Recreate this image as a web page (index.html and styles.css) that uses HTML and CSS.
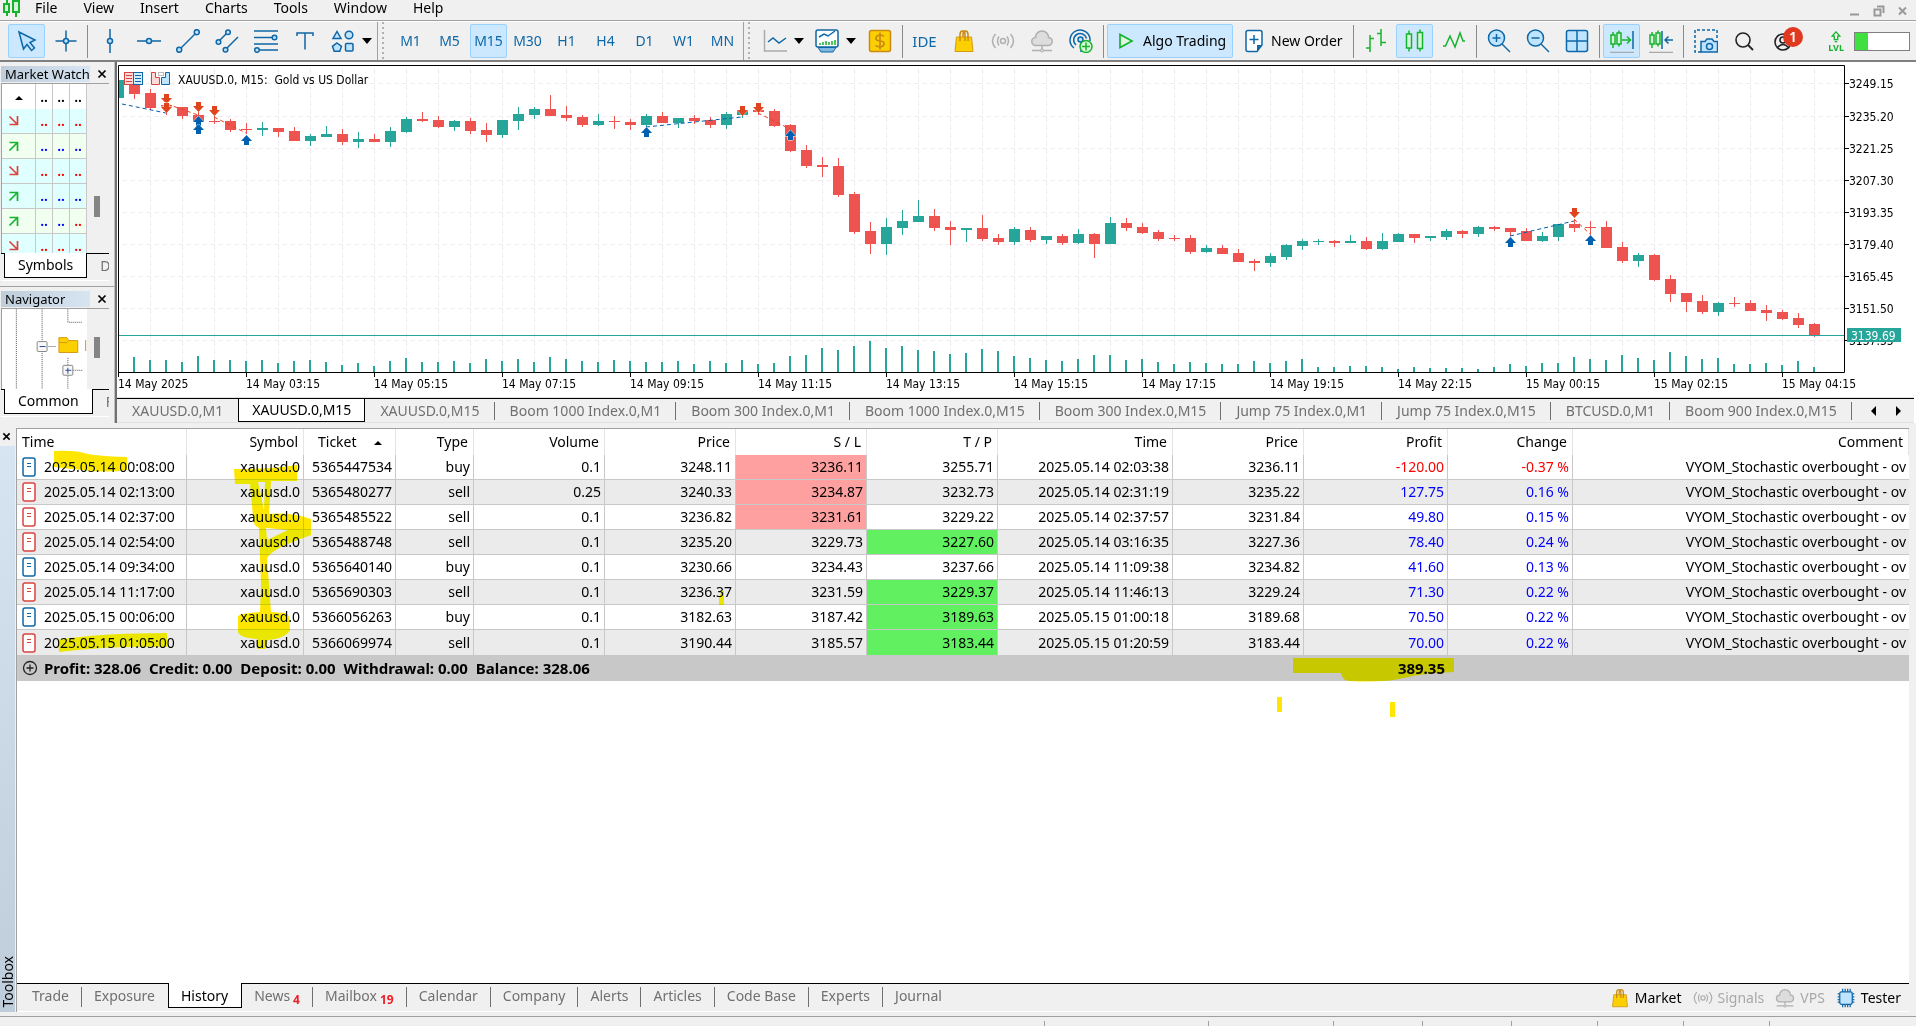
FILE: index.html
```html
<!DOCTYPE html>
<html lang="en">
<head>
<meta charset="utf-8">
<title>XAUUSD.0,M15</title>
<link rel="stylesheet" href="styles.css">
</head>
<body>
<svg class="defs" aria-hidden="true">
  <symbol id="i-bag" viewBox="0 0 24 24"><path d="M4.500 8h15l1.500 14.500H3z" fill="#fcd000" stroke="#d49a12"/><path d="M8 12V5.500Q8 2 10.500 2T13 5.500V12M11 8V5.500Q11 2 13.500 2T16 5.500V12" fill="none" stroke="#c98a12" stroke-width="1.500"/></symbol>
  <symbol id="i-signal" viewBox="0 0 24 24"><g fill="none" stroke="#b0b0b0" stroke-width="1.500"><circle cx="12" cy="12" r="2.500"/><path d="M8 7.500q-3 4.500 0 9M16 7.500q3 4.500 0 9M4.500 5q-6 7 0 14M19.500 5q6 7 0 14"/></g></symbol>
  <symbol id="i-cloud" viewBox="0 0 24 24"><path d="M6 16.500a4 4 0 0 1-.5-8 6.500 6.500 0 0 1 13 0 4 4 0 0 1-.5 8z" fill="#ddd" stroke="#b0b0b0" stroke-width="1.500"/><path d="M12 16.500V20M2 21.500h20" stroke="#b0b0b0" stroke-width="1.500"/><circle cx="12" cy="21.500" r="1.500" fill="#ddd" stroke="#b0b0b0"/></symbol>
  <symbol id="i-chip" viewBox="0 0 24 24"><path d="M8 1v22M11 1v22M14 1v22M17 1v22M2 7h20M2 10.500h20M2 14h20M2 17h20" stroke="#0e67a6" stroke-width="1.500"/><rect x="4.500" y="4.500" width="15" height="15" rx="2" fill="#bfe4ff" stroke="#0e67a6" stroke-width="1.500"/></symbol>
  <symbol id="i-deal" viewBox="0 0 14 20"><rect x="1" y="1" width="12" height="18" rx="2" fill="#fff" stroke="currentColor" stroke-width="1.500"/><path d="M5 6.500h4M5 9.500h4" stroke="currentColor" stroke-width="1"/></symbol>
  <symbol id="i-up" viewBox="0 0 12 12"><path d="M1.500 2.500h8V11M9.500 2.500L1.500 10.500" fill="none" stroke="#16b32c" stroke-width="1.700"/></symbol>
  <symbol id="i-down" viewBox="0 0 12 12"><path d="M1.500 9.500h8V1M9.500 9.500L1.500 1.500" fill="none" stroke="#d9443f" stroke-width="1.700"/></symbol>
  <symbol id="i-x" viewBox="0 0 10 10"><path d="M1.500 1.500l7 7M8.500 1.500l-7 7" stroke="currentColor" stroke-width="1.700"/></symbol>
</svg>

<header class="menubar">
  <svg class="logo" viewBox="0 0 18 20"><g fill="#d6f5d6" stroke="#16b32c" stroke-width="2"><path d="M4 0v4M4 12v4M13 0v2M13 12v5"/><rect x="1" y="4" width="5" height="8"/><rect x="10" y="1" width="6" height="11"/></g></svg>
  <nav class="menus">
    <button>File</button><button>View</button><button>Insert</button><button>Charts</button><button>Tools</button><button>Window</button><button>Help</button>
  </nav>
  <div class="window-controls">
    <button aria-label="Minimize"><svg viewBox="0 0 12 12"><path d="M1 9.500h9" stroke="#999" stroke-width="2"/></svg></button>
    <button aria-label="Restore"><svg viewBox="0 0 12 12"><path d="M1.500 4.500h6v6h-6zM4 1.500h6.500V8" fill="none" stroke="#999" stroke-width="2"/></svg></button>
    <button aria-label="Close"><svg viewBox="0 0 12 12"><path d="M2 2.500l7 7M9 2.500l-7 7" stroke="#999" stroke-width="2"/></svg></button>
  </div>
</header>

<div class="toolbar">
  <div class="group draw">
    <button class="tool on" aria-label="Cursor"><svg viewBox="0 0 24 24"><path d="M4 3l4.500 17 3.500-4.500 4.500 6 3-2.500-4.500-5.500 5-2.500z" class="bf"/></svg></button>
    <button class="tool" aria-label="Crosshair"><svg viewBox="0 0 24 24"><path d="M12 1.500v21M1.500 12h21" class="b"/><circle cx="12" cy="12" r="2.500" class="bf"/></svg></button>
    <span class="sep"></span>
    <button class="tool" aria-label="Vertical line"><svg viewBox="0 0 24 24"><path d="M12 0v24" class="b"/><circle cx="12" cy="12" r="2.500" class="bf"/></svg></button>
    <button class="tool" aria-label="Horizontal line"><svg viewBox="0 0 24 24"><path d="M0 12h24" class="b"/><circle cx="12" cy="12" r="2.500" class="bf"/></svg></button>
    <button class="tool" aria-label="Trend line"><svg viewBox="0 0 24 24"><path d="M3 21L21 3" class="b"/><circle cx="3.200" cy="20.800" r="2.500" class="bf"/><circle cx="20.800" cy="3.200" r="2.500" class="bf"/></svg></button>
    <button class="tool" aria-label="Channel"><svg viewBox="0 0 24 24"><path d="M3 13L13 3M10 21L23 8" class="b"/><circle cx="3.500" cy="13" r="2.300" class="bf"/><circle cx="13" cy="3.200" r="2.300" class="bf"/><circle cx="10.500" cy="20.800" r="2.300" class="bf"/></svg></button>
    <button class="tool" aria-label="Fibonacci"><svg viewBox="0 0 24 24"><path d="M0 2h24M0 8.500h18M0 15h24M5 21h19" class="b"/><circle cx="20.500" cy="8.500" r="2.300" class="bf"/><circle cx="3" cy="21" r="2.300" class="bf"/></svg></button>
    <button class="tool" aria-label="Text"><svg viewBox="0 0 24 24"><path d="M4 7V4h16v3M12 4v16.500" class="b"/></svg></button>
    <button class="tool wide" aria-label="Shapes"><svg viewBox="0 0 24 24"><path d="M6 2.500l4 7H2z" class="bf"/><circle cx="18" cy="6" r="3.800" class="bf"/><path d="M6 14l4.500 3.300-1.700 5H3.200l-1.700-5z" class="bf"/><rect x="14.500" y="14.500" width="7.500" height="7.500" rx="1" class="bf"/></svg><i class="caret"></i></button>
  </div>
  <span class="grip"></span>
  <div class="group frames">
    <button class="tool">M1</button><button class="tool">M5</button><button class="tool on">M15</button><button class="tool">M30</button><button class="tool">H1</button><button class="tool">H4</button><button class="tool">D1</button><button class="tool">W1</button><button class="tool">MN</button>
  </div>
  <span class="grip"></span>
  <div class="group main">
    <button class="tool wide" aria-label="Indicators"><svg viewBox="0 0 24 24"><path d="M1.500 1v21H24" fill="none" stroke="#aaa" stroke-width="1.500"/><path d="M5 13l5-4 6 5 7-5" class="b"/></svg><i class="caret"></i></button>
    <button class="tool wide" aria-label="Templates"><svg viewBox="0 0 24 24"><rect x="1" y="1" width="22" height="17" rx="2" fill="#fff" stroke="#0e67a6" stroke-width="1.500"/><path d="M3 18.500h18l-3 4.500H6z" fill="#7fb8e0" stroke="#0e67a6"/><path d="M4 8l5-3 4 2 7-5" class="b"/><path d="M5 16v-2M8 16v-3M11 16v-4M14 16v-3M17 16v-4M20 16v-5" stroke="#16b32c" stroke-width="1.500"/></svg><i class="caret"></i></button>
    <button class="tool" aria-label="Market watch"><svg viewBox="0 0 24 24"><rect x="1.500" y="1.500" width="21" height="21" rx="2" fill="#fcd000" stroke="#c98a12" stroke-width="1.500"/><path d="M16 7.500Q15 6 12 6T8 8.700 12 12t4 3.300T12 18t-4.500-1.800M12 3.500v17" fill="none" stroke="#c98a12" stroke-width="1.700"/></svg></button>
    <span class="sep"></span>
    <button class="tool ide">IDE</button>
    <button class="tool" aria-label="Market"><svg><use href="#i-bag"/></svg></button>
    <button class="tool" aria-label="Signals"><svg><use href="#i-signal"/></svg></button>
    <button class="tool" aria-label="Virtual hosting"><svg><use href="#i-cloud"/></svg></button>
    <button class="tool" aria-label="Broadcast"><svg viewBox="0 0 24 24"><g class="b"><path d="M5 19A10 10 0 1 1 21 12"/><path d="M7 16A6.500 6.500 0 1 1 17.500 9.500"/></g><path d="M12 11v12" class="b"/><circle cx="11.500" cy="10.500" r="2.500" class="bf"/><circle cx="17" cy="17.500" r="6" fill="#d9f7d9" stroke="#16b32c" stroke-width="1.500"/><path d="M17 13.500v8M13 17.500h8" stroke="#16b32c" stroke-width="1.500"/></svg></button>
    <span class="sep"></span>
    <button class="tool labelled algo on"><svg viewBox="0 0 24 24"><path d="M6 5.500v13L18 12z" fill="#dff7e4" stroke="#16b32c" stroke-width="1.700"/></svg>Algo Trading</button>
    <button class="tool labelled order"><svg viewBox="0 0 24 24"><path d="M6 1.500h12q2 0 2 2V16l-5 6.500H6q-2 0-2-2v-17q0-2 2-2z" fill="#fff" stroke="#0e67a6" stroke-width="1.500"/><path d="M20 16h-5v6.500z" fill="#0e67a6"/><path d="M12 6v9M7.500 10.500h9" class="b"/></svg>New Order</button>
    <span class="sep"></span>
    <button class="tool" aria-label="Bar chart"><svg viewBox="0 0 24 24"><path d="M6 6v17M2 19h4M6 9.500h4M17 0v17M13 4.500h4M17 13.500h5" class="g"/></svg></button>
    <button class="tool on" aria-label="Candlesticks"><svg viewBox="0 0 24 24"><path d="M6 1.500v21M17 .5v22" class="g"/><rect x="3.500" y="5" width="5" height="14" class="gf"/><rect x="14.500" y="3.500" width="5" height="16" class="gf"/></svg></button>
    <button class="tool" aria-label="Line chart"><svg viewBox="0 0 24 24"><path d="M1 17h2.500L8 7l5 11 5-14 3 8h2" class="g"/></svg></button>
    <span class="sep"></span>
    <button class="tool" aria-label="Zoom in"><svg viewBox="0 0 24 24"><path d="M15 15l8 8" class="b"/><circle cx="9.500" cy="9" r="8" class="bf"/><path d="M5.500 9h8M9.500 5v8" class="b"/></svg></button>
    <button class="tool" aria-label="Zoom out"><svg viewBox="0 0 24 24"><path d="M15 15l8 8" class="b"/><circle cx="9.500" cy="9" r="8" class="bf"/><path d="M5.500 9h8" class="b"/></svg></button>
    <button class="tool" aria-label="Tile windows"><svg viewBox="0 0 24 24"><rect x="1.500" y="1.500" width="21" height="21" rx="2" class="bf"/><path d="M12 1.500v21M1.500 12h21" class="b"/></svg></button>
    <span class="sep"></span>
    <button class="tool on" aria-label="Auto scroll"><svg viewBox="0 0 24 24"><path d="M3 3v16M9 1.500v16" class="g"/><rect x="1" y="6" width="4" height="9" class="gf"/><rect x="7" y="4" width="4" height="11" class="gf"/><path d="M12 11h8M17 7.500l3.500 3.500-3.500 3.500" class="g"/><path d="M23 2v18" class="b"/><path d="M0 23.500h24" stroke="#aaa" stroke-width="1.500"/></svg></button>
    <button class="tool" aria-label="Chart shift"><svg viewBox="0 0 24 24"><path d="M3 3v16M9 1.500v16" class="g"/><rect x="1" y="6" width="4" height="9" class="gf"/><rect x="7" y="4" width="4" height="11" class="gf"/><path d="M13 2v18M24 11h-7M19.500 7.500L16 11l3.500 3.500" class="b"/><path d="M0 23.500h24" stroke="#aaa" stroke-width="1.500"/></svg></button>
    <span class="sep"></span>
    <button class="tool" aria-label="Screenshot"><svg viewBox="0 0 24 24"><path d="M7 23H1V1h22v8" fill="none" stroke="#0e67a6" stroke-width="1.500" stroke-dasharray="3 2"/><path d="M7 12.500h4l2-2.500h5l2 2.500h3.500V23H7z" class="bf"/><circle cx="15.500" cy="17.500" r="3" class="bf"/></svg></button>
    <button class="tool" aria-label="Search"><svg viewBox="0 0 24 24"><circle cx="10" cy="11" r="7" fill="none" stroke="#222" stroke-width="1.600"/><path d="M15 16l5 5" stroke="#222" stroke-width="1.800"/></svg></button>
    <button class="tool account" aria-label="Account"><svg viewBox="0 0 24 24"><g fill="none" stroke="#222" stroke-width="1.600"><circle cx="11" cy="13" r="8"/><circle cx="11" cy="11" r="3"/><path d="M5.500 18.500q5.500-6 11 0"/></g></svg><span class="badge">1</span></button>
  </div>
  <div class="level">
    <button class="lvl"><svg viewBox="0 0 12 14"><path d="M6 1l4.500 5H8v4H4V6H1.500zM4.500 12.500h3" fill="none" stroke="#16b32c" stroke-width="1.500"/></svg>LVL</button>
    <div class="battery" role="meter" aria-label="Level" aria-valuemin="0" aria-valuemax="100" aria-valuenow="24"><i style="width: 24%"></i></div>
  </div>
</div>

<div class="workspace">
  <aside class="sidebar">
    <section class="panel market">
      <h2 class="panel-title"><span>Market Watch</span><button aria-label="Close"><svg><use href="#i-x"/></svg></button></h2>
      <div class="panel-body">
        <div class="panel-clip">
        <table class="quotes">
          <thead><tr><th><i class="sort"></i></th><th>..</th><th>..</th><th>..</th></tr></thead>
          <tbody>
            <tr class="c"><td><svg><use href="#i-down"/></svg></td><td class="r">..</td><td class="r">..</td><td class="r">..</td></tr>
            <tr><td><svg><use href="#i-up"/></svg></td><td>..</td><td>..</td><td>..</td></tr>
            <tr class="c"><td><svg><use href="#i-down"/></svg></td><td class="r">..</td><td class="r">..</td><td class="r">..</td></tr>
            <tr class="c"><td><svg><use href="#i-up"/></svg></td><td>..</td><td>..</td><td>..</td></tr>
            <tr><td><svg><use href="#i-up"/></svg></td><td>..</td><td>..</td><td class="r">..</td></tr>
            <tr class="c"><td><svg><use href="#i-down"/></svg></td><td class="r">..</td><td class="r">..</td><td class="r">..</td></tr>
          </tbody>
        </table>
        </div>
        <div class="scroll low"><i></i></div>
      </div>
      <div class="side-tabs"><button class="on">Symbols</button><button>Details</button></div>
    </section>
    <section class="panel navigator">
      <h2 class="panel-title"><span>Navigator</span><button aria-label="Close"><svg><use href="#i-x"/></svg></button></h2>
      <div class="panel-body">
        <svg class="tree" viewBox="0 0 86 82">
          <path d="M14.500 0v82M40.500 0v82M66.500 0v13h15M47 37.500h8M66.500 49v33M72 61.500h10" fill="none" stroke="#555" stroke-dasharray="1 1"/>
          <g fill="#f8f8f8" stroke="#888"><rect x="35.500" y="32.500" width="10" height="10" rx="1"/><rect x="61.500" y="56.500" width="10" height="10" rx="1"/></g>
          <path d="M38 37.500h6M64 61.500h6M66.500 59v6" stroke="#2b4a9b"/>
          <path d="M57.500 43.500v-15h8l2 3h9v12z" fill="#fcd000" stroke="#d49a12"/><path d="M57.500 33.500h8l2-2" fill="none" stroke="#d49a12"/>
          <path d="M84.500 31v11" stroke="#e08a20"/>
        </svg>
        <div class="scroll"><i></i></div>
      </div>
      <div class="side-tabs"><button class="on">Common</button><button>Favorites</button></div>
    </section>
  </aside>
  <main class="chart-pane">
    <svg class="chart" id="chart" viewBox="117 64 1797 333" preserveAspectRatio="xMinYMin meet" role="img" aria-label="XAUUSD.0, M15: Gold vs US Dollar"></svg>
    <div class="chart-tabs">
      <button>XAUUSD.0,M1</button><button class="on">XAUUSD.0,M15</button><button>XAUUSD.0,M15</button><button>Boom 1000 Index.0,M1</button><button>Boom 300 Index.0,M1</button><button>Boom 1000 Index.0,M15</button><button>Boom 300 Index.0,M15</button><button>Jump 75 Index.0,M1</button><button>Jump 75 Index.0,M15</button><button>BTCUSD.0,M1</button><button>Boom 900 Index.0,M15</button>
      <span class="pager"><button class="prev" aria-label="Previous"></button><button class="next" aria-label="Next"></button></span>
    </div>
  </main>
</div>

<section class="dock">
  <div class="dock-strip"><button aria-label="Close"><svg><use href="#i-x"/></svg></button><div class="strip-label"><span>Toolbox</span></div></div>
  <div class="dock-main">
    <div class="history">
      <table class="deals">
        <colgroup><col class="w170"><col class="w117"><col class="w92"><col class="w78"><col class="w131"><col class="w131"><col class="w131"><col class="w131"><col class="w175"><col class="w131"><col class="w144"><col class="w125"><col></colgroup>
        <thead><tr><th class="l">Time</th><th>Symbol</th><th class="l ticket">Ticket <i class="sort"></i></th><th>Type</th><th>Volume</th><th>Price</th><th>S / L</th><th>T / P</th><th>Time</th><th>Price</th><th>Profit</th><th>Change</th><th>Comment</th></tr></thead>
        <tbody>
          <tr><td class="l buy"><svg><use href="#i-deal"/></svg>2025.05.14 00:08:00</td><td>xauusd.0</td><td>5365447534</td><td>buy</td><td>0.1</td><td>3248.11</td><td class="sl">3236.11</td><td>3255.71</td><td>2025.05.14 02:03:38</td><td>3236.11</td><td class="neg">-120.00</td><td class="neg">-0.37 %</td><td>VYOM_Stochastic overbought - ov</td></tr>
          <tr><td class="l sell"><svg><use href="#i-deal"/></svg>2025.05.14 02:13:00</td><td>xauusd.0</td><td>5365480277</td><td>sell</td><td>0.25</td><td>3240.33</td><td class="sl">3234.87</td><td>3232.73</td><td>2025.05.14 02:31:19</td><td>3235.22</td><td class="pos">127.75</td><td class="pos">0.16 %</td><td>VYOM_Stochastic overbought - ov</td></tr>
          <tr><td class="l sell"><svg><use href="#i-deal"/></svg>2025.05.14 02:37:00</td><td>xauusd.0</td><td>5365485522</td><td>sell</td><td>0.1</td><td>3236.82</td><td class="sl">3231.61</td><td>3229.22</td><td>2025.05.14 02:37:57</td><td>3231.84</td><td class="pos">49.80</td><td class="pos">0.15 %</td><td>VYOM_Stochastic overbought - ov</td></tr>
          <tr><td class="l sell"><svg><use href="#i-deal"/></svg>2025.05.14 02:54:00</td><td>xauusd.0</td><td>5365488748</td><td>sell</td><td>0.1</td><td>3235.20</td><td>3229.73</td><td class="tp">3227.60</td><td>2025.05.14 03:16:35</td><td>3227.36</td><td class="pos">78.40</td><td class="pos">0.24 %</td><td>VYOM_Stochastic overbought - ov</td></tr>
          <tr><td class="l buy"><svg><use href="#i-deal"/></svg>2025.05.14 09:34:00</td><td>xauusd.0</td><td>5365640140</td><td>buy</td><td>0.1</td><td>3230.66</td><td>3234.43</td><td>3237.66</td><td>2025.05.14 11:09:38</td><td>3234.82</td><td class="pos">41.60</td><td class="pos">0.13 %</td><td>VYOM_Stochastic overbought - ov</td></tr>
          <tr><td class="l sell"><svg><use href="#i-deal"/></svg>2025.05.14 11:17:00</td><td>xauusd.0</td><td>5365690303</td><td>sell</td><td>0.1</td><td>3236.37</td><td>3231.59</td><td class="tp">3229.37</td><td>2025.05.14 11:46:13</td><td>3229.24</td><td class="pos">71.30</td><td class="pos">0.22 %</td><td>VYOM_Stochastic overbought - ov</td></tr>
          <tr><td class="l buy"><svg><use href="#i-deal"/></svg>2025.05.15 00:06:00</td><td>xauusd.0</td><td>5366056263</td><td>buy</td><td>0.1</td><td>3182.63</td><td>3187.42</td><td class="tp">3189.63</td><td>2025.05.15 01:00:18</td><td>3189.68</td><td class="pos">70.50</td><td class="pos">0.22 %</td><td>VYOM_Stochastic overbought - ov</td></tr>
          <tr><td class="l sell"><svg><use href="#i-deal"/></svg>2025.05.15 01:05:00</td><td>xauusd.0</td><td>5366069974</td><td>sell</td><td>0.1</td><td>3190.44</td><td>3185.57</td><td class="tp">3183.44</td><td>2025.05.15 01:20:59</td><td>3183.44</td><td class="pos">70.00</td><td class="pos">0.22 %</td><td>VYOM_Stochastic overbought - ov</td></tr>
        </tbody>
        <tfoot><tr><td class="l" colspan="10"><svg viewBox="0 0 16 16"><circle cx="8" cy="8" r="6.500" fill="none" stroke="#222" stroke-width="1.300"/><path d="M4.500 8h7M8 4.500v7" stroke="#222" stroke-width="1.300"/></svg>Profit: 328.06&nbsp; Credit: 0.00&nbsp; Deposit: 0.00&nbsp; Withdrawal: 0.00&nbsp; Balance: 328.06</td><td>389.35</td><td colspan="2"></td></tr></tfoot>
      </table>
      <svg class="marker" viewBox="17 429 1892 300" preserveAspectRatio="xMinYMin meet" aria-hidden="true">
        <path d="M54 451q20-1 30 2t43 4v13q-20 3-45 0l-28-3z"/>
        <path fill-rule="evenodd" d="M234 469q40 0 63-4v16H271L269 514Q290 512 311 519V535L290 543Q272 550 267 558L271 612L286 613Q290 614 290 630Q286 638 268 640L265 649H257V639Q240 638 238 632V616Q242 613 260 612L261 585L259 528Q253 526 253 517L250 484H235zM258 482L264 510L265 482zM266 528L288 530L267 540z"/>
        <path d="M58 640q40-7 109-7v14q-60-1-108 5z"/>
        <path d="M719 597l3-6h2v14h-5z"/>
        <path d="M1293 658h161v14q-30 1-50 6t-55 3q-7-1-8-8h-48z"/>
        <path d="M1277 697h5v15h-5zM1390 702h5v15h-5z"/>
      </svg>
    </div>
    <div class="dock-tabs">
      <button>Trade</button><button>Exposure</button><button class="on">History</button><button>News<b>4</b></button><button>Mailbox<b>19</b></button><button>Calendar</button><button>Company</button><button>Alerts</button><button>Articles</button><button>Code Base</button><button>Experts</button><button>Journal</button>
      <div class="services">
        <a href="#market"><svg><use href="#i-bag"/></svg>Market</a>
        <a href="#signals" class="off"><svg><use href="#i-signal"/></svg>Signals</a>
        <a href="#vps" class="off"><svg><use href="#i-cloud"/></svg>VPS</a>
        <a href="#tester"><svg><use href="#i-chip"/></svg>Tester</a>
      </div>
    </div>
  </div>
</section>
<footer class="status"><span class="s0"></span><span class="s1"></span><span class="s2"></span><span class="s3"></span><span class="s3"></span><span class="s4"></span><span class="s4"></span><span class="s4"></span><span class="s5"></span></footer>
<script src="chart.js"></script>
</body>
</html>
```
FILE: styles.css
```css
* { box-sizing: border-box; }
body {
  margin: 0;
  min-height: 100vh;
  display: flex;
  flex-direction: column;
  background: #f0f0f0;
  color: #000;
  font: 14px/20px "Noto Sans", "Open Sans", sans-serif;
  overflow-x: hidden;
}
button {
  margin: 0;
  padding: 0;
  border: 0;
  background: none;
  color: inherit;
  font: inherit;
  white-space: nowrap;
}
svg { display: block; }
.defs { position: absolute; width: 0; height: 0; }
.b { fill: none; stroke: #0e67a6; stroke-width: 1.5; }
.bf { fill: #bfe4ff; stroke: #0e67a6; stroke-width: 1.5; }
.g { fill: none; stroke: #16b32c; stroke-width: 1.5; }
.gf { fill: #d5f7d9; stroke: #16b32c; stroke-width: 1.5; }

/* menu bar */
.menubar {
  display: flex;
  height: 21px;
  padding-left: 3px;
  border-bottom: 1px solid #a0a0a0;
}
.logo { width: 18px; height: 20px; margin-right: 14px; }
.menus { display: flex; gap: 26px; height: 16px; line-height: 16px; }
.window-controls { display: flex; gap: 12px; margin-left: auto; padding: 2px 7px 0 0; }
.window-controls svg { width: 12px; height: 12px; }

/* toolbar */
.toolbar {
  display: flex;
  align-items: center;
  gap: 2px;
  height: 41px;
  padding: 0 6px 0 8px;
  border-top: 1px solid #fff;
  border-bottom: 2px solid #808080;
}
.group { display: flex; align-items: center; gap: 2px; }
.tool {
  display: flex;
  align-items: center;
  justify-content: center;
  width: 37px;
  height: 34px;
  border: 1px solid transparent;
  border-radius: 2px;
}
.tool.on { background: #cce8ff; border-color: #99d1ff; }
.tool svg { width: 24px; height: 24px; flex: none; }
.tool.wide { width: 50px; gap: 7px; justify-content: flex-start; padding-left: 5px; }
.caret { border: 5px solid transparent; border-top: 6px solid #000; border-bottom: 0; }
.sep { width: 3px; height: 33px; display: flex; justify-content: center; }
.sep::before { content: ""; width: 1px; background: #8a8a8a; }
.main .sep { width: 4px; }
.grip {
  width: 12px;
  height: 38px;
  border-left: 1px solid #a0a0a0;
  background: repeating-linear-gradient(#b0b0b0 0 2px, transparent 2px 5px) 4px 0 / 2px 100% no-repeat;
}
.frames { padding-left: 1px; }
.frames, .ide { color: #0e67a6; }
.ide { font-size: 15px; }
.labelled { justify-content: flex-start; gap: 5px; padding-left: 6px; }
.algo { width: 126px; }
.order { width: 114px; }
.account { position: relative; }
.badge {
  position: absolute;
  right: -2px;
  top: 2px;
  width: 20px;
  height: 20px;
  border-radius: 10px;
  background: #e0391f;
  color: #fff;
  font-weight: 600;
}
.level { display: flex; align-items: center; gap: 10px; margin-left: auto; }
.lvl { color: #16b32c; font-size: 9px; line-height: 9px; font-weight: 700; }
.lvl svg { width: 12px; height: 12px; margin: 0 auto; }
.battery { width: 56px; height: 19px; border: 1px solid #808080; background: #fff; }
.battery i { display: block; height: 100%; background: #41e041; }

/* workspace */
.workspace { display: grid; grid-template-columns: 115px minmax(0, 1fr); }
.sidebar { display: flex; flex-direction: column; border-right: 1px solid #c0c0c0; }
.panel { display: flex; flex-direction: column; padding: 3px 5px 0 1px; }
.market { border-bottom: 1px solid #a0a0a0; padding-bottom: 5px; }
.panel-title {
  display: flex;
  align-items: center;
  height: 18px;
  margin: 0;
  font-size: 13px;
  line-height: 16px;
  font-weight: 400;
}
.panel-title span {
  width: 89px;
  padding-left: 4px;
  white-space: nowrap;
  overflow: hidden;
  background: linear-gradient(90deg, #bfcddb, #d7e5f3);
}
.panel-title svg { width: 10px; height: 10px; margin-left: 7px; }
.panel-body {
  display: flex;
  border: 1px solid #a0a0a0;
  border-width: 1px 0 0 1px;
  background: #fff;
}
.market .panel-body { height: 170px; }
.panel-clip { flex: 1; overflow: hidden; }
.scroll { width: 22px; padding: 28px 0 0 7px; background: #f0f0f0; }
.scroll.low { padding-top: 112px; }
.scroll i { display: block; width: 6px; height: 21px; background: #858585; }
.quotes { width: 100%; table-layout: fixed; border-collapse: separate; border-spacing: 0; }
.quotes th, .quotes td {
  width: 17px;
  height: 25px;
  padding: 0;
  border-right: 1px solid #c8c8c8;
  border-bottom: 1px solid #c8c8c8;
  text-align: center;
  font-weight: 600;
  color: #00f;
}
.quotes th { color: #000; border-bottom: 0; }
.quotes th:first-child, .quotes td:first-child { width: 34px; }
.quotes td { background: #f0fff0; }
.quotes .c td { background: #e0ffff; }
.quotes td.r { color: #f00; }
.quotes svg { width: 12px; height: 12px; margin-left: 6px; }
.sort { display: inline-block; border: 4px solid transparent; border-bottom: 4px solid #000; border-top: 0; vertical-align: middle; }
.side-tabs {
  display: flex;
  height: 28px;
  padding-left: 3px;
  overflow: hidden;
  border-bottom: 1px solid #fff;
  background: linear-gradient(#000, #000) 0 0 / 100% 1px no-repeat;
  color: #707070;
}
.side-tabs button { height: 25px; padding: 0 13px; }
.side-tabs .on { background: #fff; color: #000; border: 1px solid #000; border-top: 0; }
.navigator .panel-body { height: 81px; overflow: hidden; }
.tree { width: 86px; height: 82px; }

/* chart */
.chart-pane { border-left: 2px solid #707070; min-width: 0; padding: 2px 2px 0 0; background: #fff; }
.chart { width: 100%; height: auto; border-bottom: 1px solid #e3e3e3; font: 12px "DejaVu Sans Condensed", "DejaVu Sans", sans-serif; }
.chart text.tag { fill: #fff; }
.chart-tabs {
  display: flex;
  height: 25px;
  overflow: hidden;
  border-top: 1px solid #000;
  border-bottom: 1px solid #e0e0e0;
  background: #f0f0f0;
  color: #707070;
}
.chart-tabs > button {
  display: flex;
  align-items: center;
  padding: 0 15px;
  background: linear-gradient(#707070, #707070) 100% 3px / 1px 18px no-repeat;
}
.chart-tabs > button:first-child { background: none; }
.chart-tabs > button.on { background: #fff; color: #000; border: 1px solid #000; border-top: 0; padding: 0 13px; }
.pager { display: flex; gap: 20px; align-items: center; margin-left: auto; padding-right: 13px; }
.pager button { border: 5px solid transparent; border-width: 5px 0; }
.pager .prev { border-right: 5px solid #000; }
.pager .next { border-left: 5px solid #000; }

/* toolbox */
.dock { flex: 1; display: flex; margin-top: 5px; padding-right: 7px; }
.dock-strip { width: 16px; display: flex; flex-direction: column; }
.dock-strip svg { width: 9px; height: 9px; margin: 4px 0 5px 2px; }
.strip-label {
  flex: 1;
  display: flex;
  align-items: flex-end;
  margin-right: 1px;
  background: linear-gradient(#d7e5f3, #bfcddb);
}
.strip-label span { writing-mode: vertical-rl; transform: rotate(180deg); line-height: 15px; padding-top: 4px; }
.dock-main { flex: 1; display: flex; flex-direction: column; min-width: 0; border: 1px solid #a0a0a0; border-width: 1px 0 0 1px; }
.history { position: relative; flex: 1; background: #fff; }
.deals { width: 100%; table-layout: fixed; border-collapse: separate; border-spacing: 0; }
.deals th, .deals td {
  padding: 0 3px;
  height: 25px;
  border-right: 1px solid #c8c8c8;
  border-bottom: 1px solid #c8c8c8;
  text-align: right;
  font-weight: 400;
  line-height: 20px;
  white-space: nowrap;
  overflow: hidden;
}
.deals th { height: 26px; padding-right: 5px; border-bottom: 0; border-right-color: #e5e5e5; }
.deals .l { text-align: left; padding-left: 5px; }
.deals th.ticket { padding-left: 14px; }
.deals .ticket .sort { margin-left: 14px; }
.deals tbody tr:nth-child(even) td { background: #ebebeb; }
.deals tbody td svg { display: inline-block; width: 14px; height: 20px; margin-right: 8px; vertical-align: top; }
.deals tbody tr td.sl { background: #ffa0a0; }
.deals tbody tr td.tp { background: #60f060; }
.deals tbody tr:last-child td { border-bottom: 0; }
.deals td:last-child { border-right: 0; }
.buy svg { color: #0e67a6; }
.sell svg { color: #d9443f; }
.deals .pos { color: #00f; }
.deals .neg { color: #f00; }
.deals tfoot td { height: 26px; background: #c8c8c8; border: 0; font-weight: 700; font-size: 15px; }
.deals tfoot svg { display: inline-block; width: 16px; height: 16px; margin: 2px 6px 0 0; vertical-align: top; }
.w78 { width: 78px; }
.w92 { width: 92px; }
.w117 { width: 117px; }
.w125 { width: 125px; }
.w131 { width: 131px; }
.w144 { width: 144px; }
.w170 { width: 170px; }
.w175 { width: 175px; }
.marker { position: absolute; left: 0; top: 0; width: 100%; fill: #ffe600; mix-blend-mode: darken; pointer-events: none; }
.dock-tabs {
  display: flex;
  height: 29px;
  padding-left: 3px;
  border-bottom: 1px solid #fff;
  background: linear-gradient(#000, #000) 0 0 / 100% 1px no-repeat;
  color: #707070;
}
.dock-tabs > button {
  display: flex;
  height: 25px;
  padding: 2px 13px 0 12px;
  line-height: 22px;
  background: linear-gradient(#707070, #707070) 100% 4px / 1px 20px no-repeat;
}
.dock-tabs > button:nth-child(2), .dock-tabs > button:nth-child(12) { background: none; }
.dock-tabs > button.on { background: #fff; color: #000; border: 1px solid #000; border-top: 0; }
.dock-tabs b { color: #f0202a; font-size: 12px; padding: 4px 0 0 3px; }
.services { display: flex; gap: 11px; margin-left: auto; padding: 5px 8px 0 0; }
.services a { display: flex; gap: 5px; color: #000; text-decoration: none; }
.services a.off { color: #a8a8a8; }
.services svg { width: 20px; height: 20px; }

/* status bar */
.status { display: flex; height: 10px; margin-top: 4px; border-top: 1px solid #a0a0a0; padding-top: 4px; }
.status span { border-right: 1px solid #a0a0a0; }
.status .s0 { flex: 1; }
.status .s1 { width: 164px; }
.status .s2 { width: 125px; }
.status .s3 { width: 89px; }
.status .s4 { width: 86px; }
.status .s5 { width: 146px; border: 0; }
```
FILE: chart.js
```js
// Candles: [direction, high, bodyTop, bodyBottom, low, volumeTop], one every 16 units.
const candles = [
  ['u',80,80,98,98,372],['d',85,85,94,99,357],['d',89,93,108,110,360],['d',104,105,107,115,360],['d',107,107,116,119,362],
  ['d',112,115,122,124,356],['d',116,121,122,124,360],['d',119,121,130,132,360],['d',123,129,130,134,361],['u',122,128,130,136,360],
  ['d',128,128,132,137,363],['d',127,131,141,141,361],['u',134,136,141,146,360],['u',126,134,137,137,362],['d',129,134,142,145,365],
  ['u',132,139,142,148,363],['d',134,139,142,142,366],['u',127,131,142,147,361],['u',117,119,132,133,358],['d',112,119,121,122,362],
  ['d',116,120,127,128,362],['u',120,121,127,131,361],['d',118,121,131,134,363],['d',123,130,135,142,359],['u',120,120,135,138,361],
  ['u',107,114,121,130,359],['u',107,109,115,119,362],['d',95,109,116,116,357],['d',106,115,118,121,359],['d',115,117,125,127,361],
  ['u',114,121,125,126,362],['d',116,121,122,129,360],['d',119,122,125,130,361],['u',114,116,125,127,362],['d',112,116,123,123,362],
  ['u',118,118,123,128,361],['d',115,118,121,124,364],['d',117,120,125,128,361],['u',112,114,125,129,363],['u',110,110,115,118,360],
  ['d',110,110,112,115,364],['d',109,111,126,127,363],['d',124,125,151,152,356],['d',145,150,166,168,355],['d',157,165,167,177,348],
  ['d',158,166,195,197,350],['d',192,194,232,234,346],['d',222,231,244,254,341],['u',218,227,244,255,348],['u',210,221,228,235,346],
  ['u',200,216,222,222,350],['d',209,216,228,231,351],['d',221,227,230,245,354],['u',228,228,230,242,353],['d',215,228,239,241,349],
  ['d',234,238,242,245,351],['u',227,229,242,245,356],['d',227,230,240,242,358],['u',236,236,240,244,360],['d',234,236,243,245,361],
  ['u',229,234,243,244,359],['d',233,234,244,258,355],['u',217,223,244,244,355],['d',218,223,228,231,360],['d',223,227,233,234,359],
  ['d',230,232,239,241,362],['d',235,238,239,241,364],['d',235,238,252,254,362],['u',245,248,252,253,363],['d',245,248,254,254,364],
  ['d',249,253,262,262,364],['d',259,261,263,271,361],['u',253,256,263,267,363],['u',244,245,257,260,361],['u',239,241,246,250,359],
  ['u',239,241,242,245,367],['d',240,241,243,247,367],['u',235,241,243,243,366],['d',237,241,249,250,366],['u',233,241,249,250,367],
  ['u',233,234,242,242,369],['d',234,234,238,243,367],['u',236,236,238,241,368],['u',229,231,237,240,368],['d',230,231,234,238,368],
  ['u',226,227,234,237,369],['d',226,227,229,231,367],['d',228,228,232,236,364],['d',228,231,241,241,366],['u',232,236,241,242,363],
  ['u',224,224,237,241,363],['d',220,224,228,232,357],['d',221,227,228,235,359],['d',221,227,248,248,360],['d',242,247,261,263,355],
  ['u',253,255,261,267,358],['d',254,255,280,281,360],['d',275,279,294,302,352],['d',293,293,302,312,356],['d',295,301,312,314,359],
  ['u',302,303,312,316,358],['d',297,303,304,307,364],['d',300,303,311,311,364],['d',305,310,313,321,363],['d',310,312,319,320,365],
  ['d',313,318,325,328,361],['d',323,324,336,337,367]
];
const LEFT = 118, TOP = 65, BOTTOM = 372, RIGHT = 1844, STEP = 16;
const UP = '#26a69a', DOWN = '#ef5350', BUY = '#0060b0', SELL = '#e0441c';
const out = [];
const rect = (x, y, w, h, fill) => out.push(`<rect x="${x}" y="${y}" width="${w}" height="${h}" fill="${fill}"/>`);
const text = (x, y, s, cls = '') => out.push(`<text x="${x}" y="${y}" class="${cls}">${s}</text>`);
const dash = (x1, y1, x2, y2, color, pattern) =>
  out.push(`<path d="M${x1} ${y1}L${x2} ${y2}" fill="none" stroke="${color}" stroke-dasharray="${pattern}"/>`);

const prices = ['3249.15','3235.20','3221.25','3207.30','3193.35','3179.40','3165.45','3151.50','3137.55'];
const levels = [83,116,148,180,212,244,276,308,340];
for (let x = 150; x < RIGHT; x += 32) dash(x + .5, TOP + 4, x + .5, BOTTOM, '#efebef', '5 3');
levels.forEach(y => dash(LEFT + 4, y + .5, RIGHT, y + .5, '#efebef', '5 3'));

candles.forEach(([dir, high, top, bottom, low, volume], i) => {
  const x = LEFT + STEP * i, color = dir === 'u' ? UP : DOWN;
  if (i) rect(x - 1, volume, 2, BOTTOM - volume, UP);
  rect(x, high, 1, low - high, color);
  rect(i ? x - 5 : x, top, i ? 11 : 6, bottom - top, color);
});
rect(LEFT, 335, RIGHT - LEFT, 1, UP);

[[122,104,166,113,BUY],[167,104,198,115,SELL],[214,117,246,133,SELL],[646,127,742,117,BUY],
 [758,113,790,129,SELL],[1510,236,1574,221,BUY],[1574,219,1590,234,SELL]]
  .forEach(([a, b, c, d, color]) => dash(a, b, c, d, color, '4 3'));
[[166,94],[166,103],[198,102],[214,106],[742,106],[758,103],[1574,208]].forEach(([x, y]) =>
  out.push(`<path d="M${x - 2} ${y}h5v4h3l-5.500 6l-5.500-6h3z" fill="${SELL}" stroke="#fff" paint-order="stroke"/>`));
[[198,117],[198,125],[246,136],[646,128],[790,131],[1510,238],[1590,236]].forEach(([x, y]) =>
  out.push(`<path d="M${x - 2} ${y + 9}h5v-4h3l-5.500-6l-5.500 6h3z" fill="${BUY}" stroke="#fff" paint-order="stroke"/>`));

out.push(`<path d="M118.500 372V65.500H1844.500V372.500H118" fill="none" stroke="#000"/>`);
levels.forEach((y, i) => { rect(RIGHT, y, 5, 1, '#000'); text(1849, y + 5, prices[i]); });
rect(1847, 328, 54, 14, UP);
text(1851, 340, '3139.69', 'tag');
['14 May 2025','14 May 03:15','14 May 05:15','14 May 07:15','14 May 09:15','14 May 11:15','14 May 13:15','14 May 15:15',
 '14 May 17:15','14 May 19:15','14 May 22:15','15 May 00:15','15 May 02:15','15 May 04:15']
  .forEach((label, i) => { rect(LEFT + 128 * i, BOTTOM, 1, 5, '#000'); text(LEFT + 128 * i, 388, label); });

out.push(`<rect x="124.500" y="72.500" width="9" height="12" fill="#ffd9d9" stroke="#d9443f"/><rect x="133.500" y="72.500" width="9" height="12" fill="#d5ecff" stroke="#0e67a6"/>
<path d="M126 75.500h6M126 78.500h6M126 81.500h6" stroke="#d9443f"/><path d="M135 75.500h6M135 78.500h6M135 81.500h6" stroke="#0e67a6"/>
<path d="M151.500 72.500h4v5h4v7h-8z" fill="#ffd9d9" stroke="#d9443f"/><path d="M169.500 72.500h-4v5h-4v7h8z" fill="#bfe4ff" stroke="#0e67a6"/>
<rect x="158.500" y="72.500" width="5" height="3" fill="#fff" stroke="#bbb"/>`);
text(178, 84, 'XAUUSD.0, M15:\u00a0 Gold vs US Dollar');
document.getElementById('chart').innerHTML = out.join('');
```
